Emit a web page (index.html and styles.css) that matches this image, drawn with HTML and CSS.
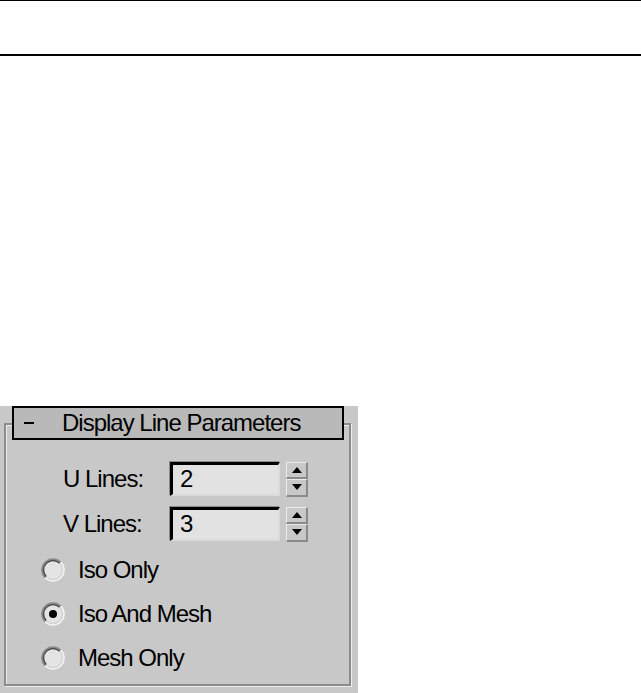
FILE: index.html
```html
<!DOCTYPE html>
<html>
<head>
<meta charset="utf-8">
<link rel="stylesheet" href="styles.css">
</head>
<body>
<div class="topbar"></div>
<div class="panel">
  <div class="rollout-head"><span class="minus"></span><span class="title">Display Line Parameters</span></div>
  <div class="group">
    <div class="field">
      <span class="label">U Lines:</span>
      <span class="input">2</span>
      <span class="spinner"><span class="spin up"><span class="tri-up"></span></span><span class="spin down"><span class="tri-down"></span></span></span>
    </div>
    <div class="field second">
      <span class="label">V Lines:</span>
      <span class="input">3</span>
      <span class="spinner"><span class="spin up"><span class="tri-up"></span></span><span class="spin down"><span class="tri-down"></span></span></span>
    </div>
    <div class="radios">
      <div class="radio">
        <svg class="rb" width="24" height="24" viewBox="0 0 24 24"><circle cx="12" cy="12" r="11" fill="#e4e4e4"/><path d="M4.22 19.78 A11 11 0 0 1 19.78 4.22" fill="none" stroke="#8a8a8a" stroke-width="1.6"/><path d="M19.78 4.22 A11 11 0 0 1 4.22 19.78" fill="none" stroke="#f4f4f4" stroke-width="1.6"/><path d="M5.28 18.72 A9.5 9.5 0 0 1 18.72 5.28" fill="none" stroke="#4a4a4a" stroke-width="1.6"/><path d="M18.72 5.28 A9.5 9.5 0 0 1 5.28 18.72" fill="none" stroke="#d4d4d4" stroke-width="1.6"/></svg>
        <span class="rlabel">Iso Only</span>
      </div>
      <div class="radio">
        <svg class="rb" width="24" height="24" viewBox="0 0 24 24"><circle cx="12" cy="12" r="11" fill="#e4e4e4"/><path d="M4.22 19.78 A11 11 0 0 1 19.78 4.22" fill="none" stroke="#8a8a8a" stroke-width="1.6"/><path d="M19.78 4.22 A11 11 0 0 1 4.22 19.78" fill="none" stroke="#f4f4f4" stroke-width="1.6"/><path d="M5.28 18.72 A9.5 9.5 0 0 1 18.72 5.28" fill="none" stroke="#4a4a4a" stroke-width="1.6"/><path d="M18.72 5.28 A9.5 9.5 0 0 1 5.28 18.72" fill="none" stroke="#d4d4d4" stroke-width="1.6"/><circle cx="12" cy="12" r="4" fill="#000"/></svg>
        <span class="rlabel">Iso And Mesh</span>
      </div>
      <div class="radio">
        <svg class="rb" width="24" height="24" viewBox="0 0 24 24"><circle cx="12" cy="12" r="11" fill="#e4e4e4"/><path d="M4.22 19.78 A11 11 0 0 1 19.78 4.22" fill="none" stroke="#8a8a8a" stroke-width="1.6"/><path d="M19.78 4.22 A11 11 0 0 1 4.22 19.78" fill="none" stroke="#f4f4f4" stroke-width="1.6"/><path d="M5.28 18.72 A9.5 9.5 0 0 1 18.72 5.28" fill="none" stroke="#4a4a4a" stroke-width="1.6"/><path d="M18.72 5.28 A9.5 9.5 0 0 1 5.28 18.72" fill="none" stroke="#d4d4d4" stroke-width="1.6"/></svg>
        <span class="rlabel">Mesh Only</span>
      </div>
    </div>
  </div>
</div>
</body>
</html>
```
FILE: styles.css
```css
html, body {
  margin: 0;
  padding: 0;
  background: #fff;
}
body {
  width: 641px;
  height: 693px;
  overflow: hidden;
  font-family: "Liberation Sans", Arial, sans-serif;
  font-size: 24px;
  letter-spacing: -1px;
  color: #000;
}
.topbar {
  height: 53px;
  border-top: 1px solid #000;
  border-bottom: 2px solid #000;
  margin-bottom: 350px;
}
.panel {
  width: 358px;
  height: 287px;
  background: #c8c8c8;
  box-sizing: border-box;
  padding-top: 0;
  overflow: hidden;
}
.rollout-head {
  position: relative;
  z-index: 1;
  margin-left: 12px;
  width: 332px;
  height: 34px;
  box-sizing: border-box;
  border: 2px solid #000;
  background: #b9b9b9;
  display: flex;
  align-items: center;
}
.minus {
  display: block;
  width: 10px;
  height: 2px;
  background: #000;
  margin-left: 10px;
  margin-right: 28px;
}
.title {
  line-height: 30px;
}
.group {
  margin-top: -17px;
  margin-left: 4px;
  width: 347px;
  height: 263px;
  box-sizing: border-box;
  border: 2px solid #8c8c8c;
  box-shadow: inset 1px 1px 0 #ececec, 1px 1px 0 #ececec;
  padding-top: 37px;
}
.field {
  display: flex;
  align-items: center;
  height: 34px;
  padding-left: 57px;
}
.field.second {
  margin-top: 11px;
}
.label {
  width: 107px;
  line-height: 34px;
}
.input {
  box-sizing: border-box;
  width: 110px;
  height: 34px;
  background: #e2e2e2;
  border-style: solid;
  border-width: 3px 2px 2px 3px;
  border-color: #000 #dadada #dadada #000;
  box-shadow: -1px -1px 0 #8a8a8a;
  padding-left: 7px;
  line-height: 28px;
}
.spinner {
  margin-left: 6px;
  width: 22px;
  height: 35px;
  display: flex;
  flex-direction: column;
}
.spin {
  flex: 1;
  box-sizing: border-box;
  border-style: solid;
  border-width: 1px 2px 2px 1px;
  border-color: #ececec #8a8a8a #8a8a8a #ececec;
  background: #c8c8c8;
  display: flex;
  align-items: center;
  justify-content: center;
}
.tri-up {
  width: 0;
  height: 0;
  border-left: 5px solid transparent;
  border-right: 5px solid transparent;
  border-bottom: 6px solid #000;
}
.tri-down {
  width: 0;
  height: 0;
  border-left: 5px solid transparent;
  border-right: 5px solid transparent;
  border-top: 6px solid #000;
}
.radios {
  margin-top: 7px;
  padding-left: 35px;
}
.radio {
  display: flex;
  align-items: center;
  height: 44px;
}
.rb {
  display: block;
  flex: none;
}
.rlabel {
  margin-left: 13px;
  line-height: 44px;
}
```
